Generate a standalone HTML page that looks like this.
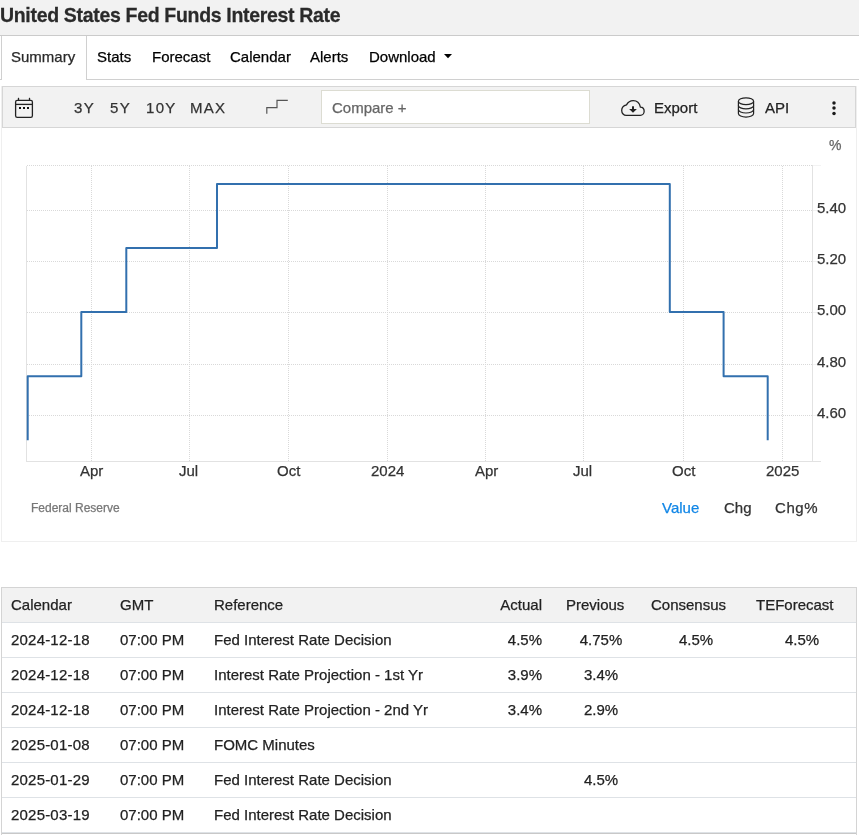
<!DOCTYPE html>
<html><head><meta charset="utf-8">
<style>
html,body{margin:0;padding:0;}
body{width:859px;height:835px;overflow:hidden;position:relative;background:#fff;font-family:"Liberation Sans",sans-serif;color:#333;}
.a{position:absolute;white-space:nowrap;will-change:transform;-webkit-text-stroke:0.25px currentColor;}
.t15{font-size:15px;line-height:15px;}
.r{position:absolute;}
</style></head><body>
<!-- title area -->
<div class="r" style="left:0;top:0;width:859px;height:35px;background:#f2f2f2;"></div>
<div class="r" style="left:0;top:35px;width:859px;height:1px;background:#cbcbcb;"></div>
<div class="a" style="left:0;top:6px;font-size:19.5px;line-height:19.5px;letter-spacing:-0.32px;transform:scaleY(1.04);transform-origin:0 16px;font-weight:bold;color:#2a2a2a;">United States Fed Funds Interest Rate</div>

<!-- tabs -->
<div class="r" style="left:1px;top:36px;width:1px;height:44px;background:#d0d0d0;"></div>
<div class="r" style="left:86px;top:36px;width:1px;height:44px;background:#d0d0d0;"></div>
<div class="r" style="left:0;top:79px;width:2px;height:1px;background:#d0d0d0;"></div>
<div class="r" style="left:86px;top:79px;width:773px;height:1px;background:#d0d0d0;"></div>
<div class="a t15" style="left:11px;top:49px;color:#2a2a2a;">Summary</div>
<div class="a t15" style="left:97px;top:49px;color:#000;">Stats</div>
<div class="a t15" style="left:152px;top:49px;color:#000;">Forecast</div>
<div class="a t15" style="left:230px;top:49px;color:#000;">Calendar</div>
<div class="a t15" style="left:310px;top:49px;color:#000;">Alerts</div>
<div class="a t15" style="left:369px;top:49px;color:#000;">Download</div>
<svg class="r" style="left:443px;top:53px;" width="10" height="7"><path d="M1 1 H9 L5 5.2 Z" fill="#000"/></svg>

<!-- chart container -->
<div class="r" style="left:1px;top:86px;width:854px;height:455px;border:1px solid #efefef;border-top:none;"></div>
<!-- toolbar -->
<div class="r" style="left:2px;top:86px;width:852px;height:40px;background:#f2f2f2;border:1px solid #d6d6d6;"></div>
<svg class="r" style="left:0;top:86px;" width="859" height="42">
 <g fill="none" stroke="#222" stroke-width="1.3">
  <rect x="15.6" y="14.4" width="16.8" height="17" rx="1.6"/>
  <line x1="15.6" y1="18.4" x2="32.4" y2="18.4"/>
  <line x1="18.5" y1="11.8" x2="18.5" y2="14.4"/>
  <line x1="29.5" y1="11.8" x2="29.5" y2="14.4"/>
 </g>
 <g fill="#111"><rect x="19" y="21" width="2" height="2"/><rect x="23" y="21" width="2" height="2"/><rect x="27" y="21" width="2" height="2"/></g>
 <path d="M266.8 27.8 V21.6 H277 V14.4 H287.8" fill="none" stroke="#555" stroke-width="1.2"/>
</svg>
<div class="a t15" style="left:74px;top:100px;color:#333;letter-spacing:1.3px;">3Y</div>
<div class="a t15" style="left:110px;top:100px;color:#333;letter-spacing:1.3px;">5Y</div>
<div class="a t15" style="left:146px;top:100px;color:#333;letter-spacing:1.3px;">10Y</div>
<div class="a t15" style="left:190px;top:100px;color:#333;letter-spacing:1.3px;">MAX</div>
<div class="r" style="left:321px;top:90px;width:267px;height:32px;background:#fff;border:1px solid #dcdcd2;"></div>
<div class="a t15" style="left:332px;top:100px;color:#666;">Compare +</div>
<svg class="r" style="left:615px;top:94px;" width="40" height="28">
 <path d="M11.2 21.4 H25.3 C27.5 21.4 29.15 19.5 29.15 17.2 C29.15 14.9 27.5 13.2 25.4 13.1 C24.6 9.3 21.8 6.6 18.2 6.6 C15.2 6.6 12.8 8.4 11.5 10.9 C8.7 11.5 6.7 13.9 6.7 16.5 C6.7 19.2 8.8 21.4 11.2 21.4 Z" fill="none" stroke="#222" stroke-width="1.3"/>
 <rect x="17" y="12.3" width="2" height="3.5" fill="#222"/>
 <path d="M14.1 15.1 H21.9 L18 18.7 Z" fill="#222"/>
</svg>
<div class="a t15" style="left:654px;top:100px;color:#222;">Export</div>
<svg class="r" style="left:732px;top:94px;" width="28" height="28">
 <g fill="none" stroke="#222" stroke-width="1.2">
  <ellipse cx="14" cy="7.2" rx="7.6" ry="3.4"/>
  <path d="M6.4 7.2 V19.6 C6.4 21.5 9.8 23.1 14 23.1 C18.2 23.1 21.6 21.5 21.6 19.6 V7.2"/>
  <path d="M6.4 11.4 C6.4 13.3 9.8 14.9 14 14.9 C18.2 14.9 21.6 13.3 21.6 11.4"/>
  <path d="M6.4 15.5 C6.4 17.4 9.8 19 14 19 C18.2 19 21.6 17.4 21.6 15.5"/>
 </g>
</svg>
<div class="a t15" style="left:765px;top:100px;color:#222;">API</div>
<svg class="r" style="left:828px;top:96px;" width="12" height="24">
 <g fill="#1a1a1a"><circle cx="6" cy="6.9" r="1.75"/><circle cx="6" cy="12.1" r="1.75"/><circle cx="6" cy="17.4" r="1.75"/></g>
</svg>

<!-- chart -->
<svg class="r" style="left:0;top:0;" width="859" height="560">
 <g shape-rendering="crispEdges">
  <g stroke="#d9d9d9" stroke-width="1" stroke-dasharray="1 1">
   <line x1="27" y1="165.5" x2="812" y2="165.5"/>
   <line x1="27" y1="210.5" x2="812" y2="210.5"/>
   <line x1="27" y1="261.5" x2="812" y2="261.5"/>
   <line x1="27" y1="312.5" x2="812" y2="312.5"/>
   <line x1="27" y1="364.5" x2="812" y2="364.5"/>
   <line x1="27" y1="415.5" x2="812" y2="415.5"/>
   <line x1="91.5" y1="166" x2="91.5" y2="461"/>
   <line x1="189.5" y1="166" x2="189.5" y2="461"/>
   <line x1="288.5" y1="166" x2="288.5" y2="461"/>
   <line x1="387.5" y1="166" x2="387.5" y2="461"/>
   <line x1="485.5" y1="166" x2="485.5" y2="461"/>
   <line x1="583.5" y1="166" x2="583.5" y2="461"/>
   <line x1="683.5" y1="166" x2="683.5" y2="461"/>
   <line x1="782.5" y1="166" x2="782.5" y2="461"/>
  </g>
  <g stroke="#f3f3f3" stroke-width="1">
   <line x1="813" y1="165.5" x2="821" y2="165.5"/>
   <line x1="813" y1="210.5" x2="817" y2="210.5"/>
   <line x1="813" y1="261.5" x2="817" y2="261.5"/>
   <line x1="813" y1="312.5" x2="817" y2="312.5"/>
   <line x1="813" y1="364.5" x2="817" y2="364.5"/>
   <line x1="813" y1="415.5" x2="817" y2="415.5"/>
  </g>
  <g stroke="#e2e2e2" stroke-width="1">
   <line x1="26.5" y1="166" x2="26.5" y2="461"/>
   <line x1="812.5" y1="165" x2="812.5" y2="461"/>
   <line x1="26" y1="461.5" x2="821" y2="461.5"/>
  </g>
 </g>
 <path d="M27.7 440.2 V376.2 H81.3 V312.1 H126.3 V248 H217 V184 H669.8 V312.1 H723.6 V376.2 H767.7 V440.2" fill="none" stroke="#3270ae" stroke-width="2" stroke-linejoin="round"/>
</svg>
<div class="a" style="left:829px;top:138px;font-size:14px;line-height:14px;color:#666;">%</div>
<div class="a t15" style="left:817px;top:200px;color:#333;">5.40</div>
<div class="a t15" style="left:817px;top:251px;color:#333;">5.20</div>
<div class="a t15" style="left:817px;top:302px;color:#333;">5.00</div>
<div class="a t15" style="left:817px;top:354px;color:#333;">4.80</div>
<div class="a t15" style="left:817px;top:405px;color:#333;">4.60</div>

<div class="a t15" style="left:80px;top:463px;color:#333;">Apr</div>
<div class="a t15" style="left:179px;top:463px;color:#333;">Jul</div>
<div class="a t15" style="left:277px;top:463px;color:#333;">Oct</div>
<div class="a t15" style="left:371px;top:463px;color:#333;">2024</div>
<div class="a t15" style="left:475px;top:463px;color:#333;">Apr</div>
<div class="a t15" style="left:573px;top:463px;color:#333;">Jul</div>
<div class="a t15" style="left:672px;top:463px;color:#333;">Oct</div>
<div class="a t15" style="left:766px;top:463px;color:#333;">2025</div>

<div class="a" style="left:31px;top:502px;font-size:12px;line-height:12px;color:#777;">Federal Reserve</div>
<div class="a t15" style="left:662px;top:500px;color:#1186e6;">Value</div>
<div class="a t15" style="left:724px;top:500px;color:#333;">Chg</div>
<div class="a t15" style="left:775px;top:500px;color:#333;letter-spacing:0.6px;">Chg%</div>

<!-- table -->
<div id="tbl">
<div class="r" style="left:1px;top:587px;width:854px;height:35px;background:#f2f2f2;border:1px solid #d4d4d4;border-bottom:none;"></div>
<div class="r" style="left:1px;top:622px;width:1px;height:213px;background:#d4d4d4;"></div>
<div class="r" style="left:856px;top:622px;width:1px;height:213px;background:#d4d4d4;"></div>
<div class="r" style="left:2px;top:622px;width:854px;height:1px;background:#dee2e6;"></div>
<div class="r" style="left:2px;top:657px;width:854px;height:1px;background:#dee2e6;"></div>
<div class="r" style="left:2px;top:692px;width:854px;height:1px;background:#dee2e6;"></div>
<div class="r" style="left:2px;top:727px;width:854px;height:1px;background:#dee2e6;"></div>
<div class="r" style="left:2px;top:762px;width:854px;height:1px;background:#dee2e6;"></div>
<div class="r" style="left:2px;top:797px;width:854px;height:1px;background:#dee2e6;"></div>
<div class="r" style="left:2px;top:832px;width:854px;height:1px;background:#dee2e6;"></div>
<div class="r" style="left:2px;top:833px;width:854px;height:1px;background:#c8c8c8;"></div>
<div class="a t15" style="left:11px;top:597px;color:#222;">Calendar</div>
<div class="a t15" style="left:120px;top:597px;color:#222;">GMT</div>
<div class="a t15" style="left:213.5px;top:597px;color:#222;">Reference</div>
<div class="a t15" style="left:442px;width:100px;text-align:right;top:597px;color:#222;">Actual</div>
<div class="a t15" style="left:566px;top:597px;color:#222;">Previous</div>
<div class="a t15" style="left:651px;top:597px;color:#222;">Consensus</div>
<div class="a t15" style="left:756px;top:597px;color:#222;">TEForecast</div>
<div class="a t15" style="left:11px;top:632px;color:#222;letter-spacing:0.2px;">2024-12-18</div>
<div class="a t15" style="left:120px;top:632px;color:#222;">07:00 PM</div>
<div class="a t15" style="left:213.5px;top:632px;color:#222;">Fed Interest Rate Decision</div>
<div class="a t15" style="left:442px;width:100px;text-align:right;top:632px;color:#222;">4.5%</div>
<div class="a t15" style="left:551px;width:100px;text-align:center;top:632px;color:#222;">4.75%</div>
<div class="a t15" style="left:646px;width:100px;text-align:center;top:632px;color:#222;">4.5%</div>
<div class="a t15" style="left:752px;width:100px;text-align:center;top:632px;color:#222;">4.5%</div>
<div class="a t15" style="left:11px;top:667px;color:#222;letter-spacing:0.2px;">2024-12-18</div>
<div class="a t15" style="left:120px;top:667px;color:#222;">07:00 PM</div>
<div class="a t15" style="left:213.5px;top:667px;color:#222;">Interest Rate Projection - 1st Yr</div>
<div class="a t15" style="left:442px;width:100px;text-align:right;top:667px;color:#222;">3.9%</div>
<div class="a t15" style="left:551px;width:100px;text-align:center;top:667px;color:#222;">3.4%</div>
<div class="a t15" style="left:11px;top:702px;color:#222;letter-spacing:0.2px;">2024-12-18</div>
<div class="a t15" style="left:120px;top:702px;color:#222;">07:00 PM</div>
<div class="a t15" style="left:213.5px;top:702px;color:#222;">Interest Rate Projection - 2nd Yr</div>
<div class="a t15" style="left:442px;width:100px;text-align:right;top:702px;color:#222;">3.4%</div>
<div class="a t15" style="left:551px;width:100px;text-align:center;top:702px;color:#222;">2.9%</div>
<div class="a t15" style="left:11px;top:737px;color:#222;letter-spacing:0.2px;">2025-01-08</div>
<div class="a t15" style="left:120px;top:737px;color:#222;">07:00 PM</div>
<div class="a t15" style="left:213.5px;top:737px;color:#222;">FOMC Minutes</div>
<div class="a t15" style="left:11px;top:772px;color:#222;letter-spacing:0.2px;">2025-01-29</div>
<div class="a t15" style="left:120px;top:772px;color:#222;">07:00 PM</div>
<div class="a t15" style="left:213.5px;top:772px;color:#222;">Fed Interest Rate Decision</div>
<div class="a t15" style="left:551px;width:100px;text-align:center;top:772px;color:#222;">4.5%</div>
<div class="a t15" style="left:11px;top:807px;color:#222;letter-spacing:0.2px;">2025-03-19</div>
<div class="a t15" style="left:120px;top:807px;color:#222;">07:00 PM</div>
<div class="a t15" style="left:213.5px;top:807px;color:#222;">Fed Interest Rate Decision</div>
</div>
</body></html>
